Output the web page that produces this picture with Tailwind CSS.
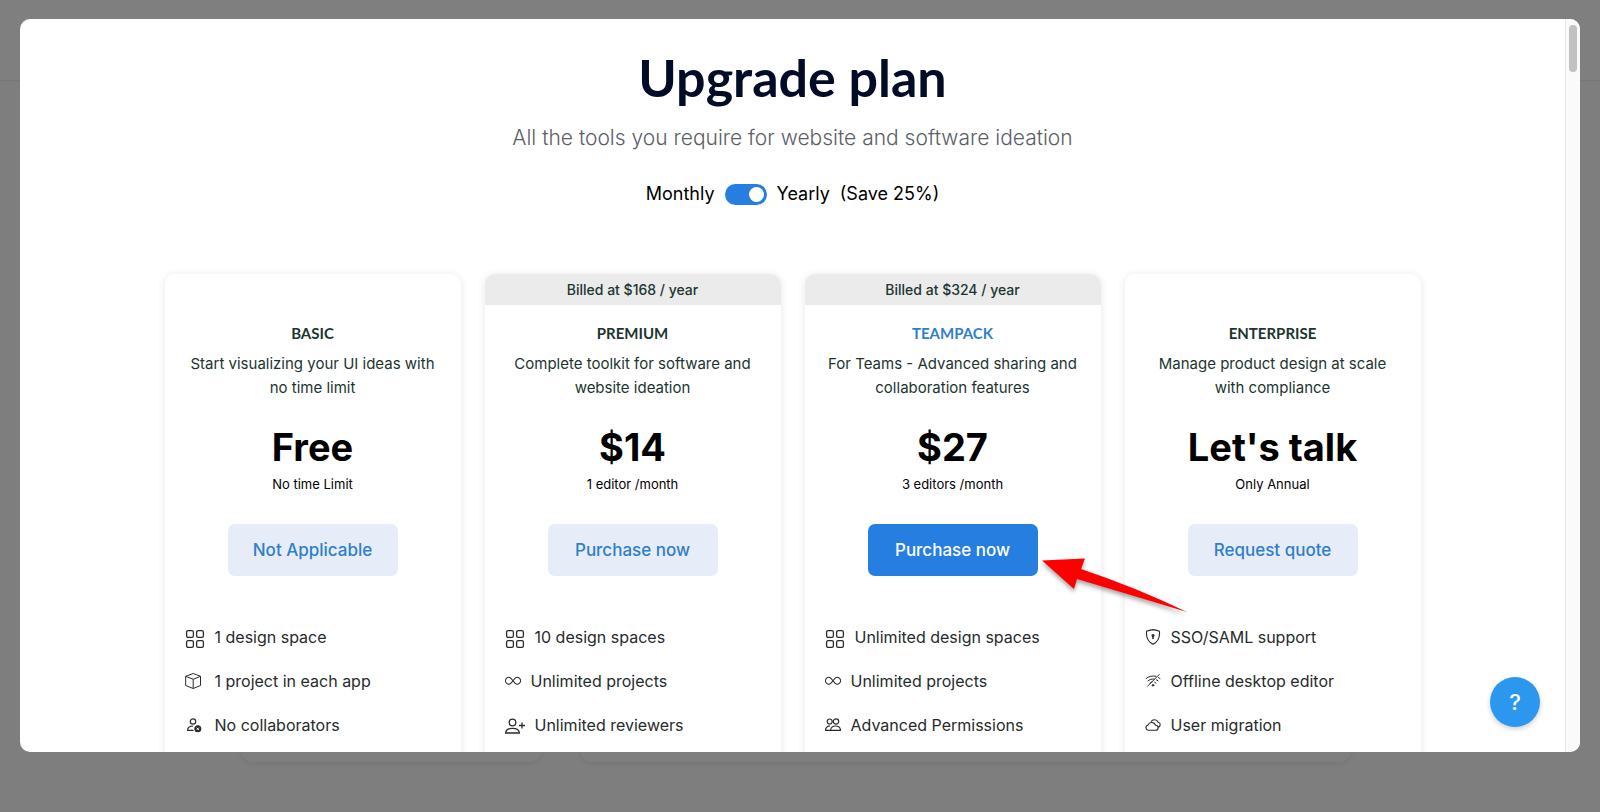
<!doctype html>
<html lang="en">

<head>
    <meta charset="UTF-8">
    <meta name="viewport" content="width=device-width, initial-scale=1.0">
    <title>Upgrade plan</title>
    <script src="https://cdn.jsdelivr.net/npm/@tailwindcss/browser@4"></script>
</head>

<body class="relative h-screen overflow-hidden bg-[#fcfcfc] font-['Inter',sans-serif]">
    <!-- shared icons -->
    <svg class="hidden">
        <symbol id="icon-grid" viewBox="0 0 20 20">
            <g fill="none" stroke="currentColor" stroke-width="1.3">
                <rect x="1.6" y="1.6" width="6.8" height="6.8" rx="1.6" />
                <rect x="11.6" y="1.6" width="6.8" height="6.8" rx="1.6" />
                <rect x="1.6" y="11.6" width="6.8" height="6.8" rx="1.6" />
                <rect x="11.6" y="11.6" width="6.8" height="6.8" rx="1.6" />
            </g>
        </symbol>
        <symbol id="icon-infinity" viewBox="0 0 16 16">
            <path fill="currentColor" d="M5.68 5.792 7.345 7.75 5.681 9.708a2.75 2.75 0 1 1 0-3.916ZM8 6.978 6.416 5.113l-.014-.015a3.75 3.75 0 1 0 0 5.304l.014-.015L8 8.522l1.584 1.865.014.015a3.75 3.75 0 1 0 0-5.304l-.014.015zm.656.772 1.663-1.958a2.75 2.75 0 1 1 0 3.916z" />
        </symbol>
    </svg>

    <!-- page behind the dialog -->
    <div class="flex h-full flex-col">
        <header class="h-[81px] shrink-0 border-b border-[#eeeeee] bg-white"></header>
        <main class="flex h-[681px] gap-[38px] pr-[249px] pl-[241px]">
            <div class="w-[301px] rounded-b-xl bg-white shadow-[0_2px_4px_rgba(0,0,0,0.08)]"></div>
            <div class="flex-1 rounded-b-xl bg-white shadow-[0_2px_4px_rgba(0,0,0,0.08)]"></div>
        </main>
    </div>

    <!-- dialog -->
    <div class="absolute inset-0 flex bg-black/50 px-5 pt-[19px] pb-[60px]">
        <div role="dialog" aria-labelledby="dialog-title" class="flex flex-1 overflow-hidden rounded-[10px] bg-white">
            <div class="flex-1 overflow-hidden pt-[30px]">
                <div class="flex flex-col items-center text-center">
                    <h1 id="dialog-title" class="font-['Lato',sans-serif] text-[52px] leading-[56px] font-bold text-[#020c27]">Upgrade plan</h1>
                    <p class="mt-[17px] text-[21px] leading-8 font-light text-[#5b5e68]">All the tools you require for website and software ideation</p>
                    <div class="mt-7 flex h-6 items-center gap-2.5 text-lg leading-6 text-black">
                        <label for="billing">Monthly</label>
                        <input id="billing" type="checkbox" role="switch" checked
                            class="relative h-[21px] w-[42px] appearance-none rounded-full bg-[#d0d0d0] checked:bg-[#257ee0] before:absolute before:top-[3px] before:left-[3px] before:size-[15px] before:rounded-full before:bg-white checked:before:left-6">
                        <label for="billing">Yearly</label>
                        <span>(Save 25%)</span>
                    </div>
                </div>

                <div class="mx-auto mt-[68px] grid max-w-[1256px] grid-cols-4 gap-6">
                    <!-- basic -->
                    <section class="flex h-[620px] flex-col rounded-[10px] bg-white text-center text-[#1c3530] shadow-[0_1px_8px_rgba(0,0,0,0.1)]">
                        <div class="h-[31px]"></div>
                        <h2 class="mt-4 font-['Lato',sans-serif] text-[15px] leading-6 font-bold">BASIC</h2>
                        <p class="mt-[7px] px-5 text-[15px] leading-6">Start visualizing your UI ideas with no time limit</p>
                        <p class="mt-[23px] text-[38px] leading-[48px] font-bold text-black">Free</p>
                        <p class="mt-[3px] text-[13px] leading-5 text-black">No time Limit</p>
                        <div class="mt-[30px] flex justify-center">
                            <button class="h-[52px] w-[170px] rounded-[7px] bg-[#e6edf8] pt-0.5 text-[17px] font-medium text-[#2f7fcb]">Not Applicable</button>
                        </div>
                        <ul class="mt-[49px] flex flex-col gap-5 px-5 text-left text-base leading-6 text-[#272b2b]">
                            <li class="flex items-center gap-2.5">
                                <svg class="mt-1 size-5"><use href="#icon-grid" /></svg>
                                1 design space
                            </li>
                            <li class="flex items-center gap-2.5">
                                <svg class="mt-0.5 size-5" viewBox="0 0 20 20" fill="none" stroke="currentColor" stroke-linejoin="round">
                                    <path d="M8.200 1.500 15.500 4.300V13.500L8.200 16.500 .7 13.500V4.300ZM.7 4.300 8.200 7.300 15.500 4.300M8.200 7.300V16.500" />
                                </svg>
                                1 project in each app
                            </li>
                            <li class="flex items-center gap-2.5">
                                <svg class="mt-0.5 size-5" viewBox="0 0 20 20" fill="none" stroke="currentColor" stroke-width="1.200">
                                    <circle cx="8" cy="5.500" r="2.700" />
                                    <path d="M8.500 14.400H2.600C2.600 11.700 4.600 10 8.200 10" />
                                    <circle cx="12.800" cy="12.800" r="3.500" fill="currentColor" stroke="none" />
                                    <path d="M11.700 11.700l2.200 2.200m0-2.200l-2.200 2.200" stroke="#fff" stroke-width="1" />
                                </svg>
                                No collaborators
                            </li>
                        </ul>
                    </section>

                    <!-- premium -->
                    <section class="flex h-[620px] flex-col rounded-[10px] bg-white text-center text-[#1c3530] shadow-[0_1px_8px_rgba(0,0,0,0.1)]">
                        <div class="h-[31px] rounded-t-[10px] bg-[#ebebeb] text-sm leading-[31px] font-medium">Billed at $168 / year</div>
                        <h2 class="mt-4 font-['Lato',sans-serif] text-[15px] leading-6 font-bold">PREMIUM</h2>
                        <p class="mt-[7px] px-5 text-[15px] leading-6">Complete toolkit for software and website ideation</p>
                        <p class="mt-[23px] text-[38px] leading-[48px] font-bold text-black">$14</p>
                        <p class="mt-[3px] text-[13px] leading-5 text-black">1 editor /month</p>
                        <div class="mt-[30px] flex justify-center">
                            <button class="h-[52px] w-[170px] rounded-[7px] bg-[#e6edf8] pt-0.5 text-[17px] font-medium text-[#2f7fcb]">Purchase now</button>
                        </div>
                        <ul class="mt-[49px] flex flex-col gap-5 px-5 text-left text-base leading-6 text-[#272b2b]">
                            <li class="flex items-center gap-2.5">
                                <svg class="mt-1 size-5"><use href="#icon-grid" /></svg>
                                10 design spaces
                            </li>
                            <li class="flex items-center gap-2.5">
                                <svg class="size-4"><use href="#icon-infinity" /></svg>
                                Unlimited projects
                            </li>
                            <li class="flex items-center gap-2.5">
                                <svg class="mt-0.5 size-5" viewBox="0 0 20 20" fill="none" stroke="currentColor" stroke-width="1.300">
                                    <circle cx="7.500" cy="6.500" r="3.300" />
                                    <path d="M.7 17C.9 13.800 3.800 12.300 7.500 12.300S14.200 13.800 14.400 17ZM17 6.500V12.500M14 9.500H20" />
                                </svg>
                                Unlimited reviewers
                            </li>
                        </ul>
                    </section>

                    <!-- teampack -->
                    <section class="flex h-[620px] flex-col rounded-[10px] bg-white text-center text-[#1c3530] shadow-[0_1px_8px_rgba(0,0,0,0.1)]">
                        <div class="h-[31px] rounded-t-[10px] bg-[#ebebeb] text-sm leading-[31px] font-medium">Billed at $324 / year</div>
                        <h2 class="mt-4 font-['Lato',sans-serif] text-[15px] leading-6 font-bold text-[#2f7fcb]">TEAMPACK</h2>
                        <p class="mt-[7px] px-5 text-[15px] leading-6">For Teams - Advanced sharing and collaboration features</p>
                        <p class="mt-[23px] text-[38px] leading-[48px] font-bold text-black">$27</p>
                        <p class="mt-[3px] text-[13px] leading-5 text-black">3 editors /month</p>
                        <div class="mt-[30px] flex justify-center">
                            <div class="relative">
                                <button class="h-[52px] w-[170px] rounded-[7px] bg-[#257ee0] pt-0.5 text-[17px] font-medium text-white">Purchase now</button>
                                <!-- pointer to the purchase button -->
                                <svg class="absolute top-7 left-full z-10 h-[70px] w-[160px] drop-shadow-[0_3px_2px_rgba(0,0,0,0.35)]" viewBox="0 0 160 70">
                                    <path fill="#ff0000" d="M4 8.500 47 6.500 43 17Q97 35 149 60Q93 43 39 27L36 37Z" />
                                </svg>
                            </div>
                        </div>
                        <ul class="mt-[49px] flex flex-col gap-5 px-5 text-left text-base leading-6 text-[#272b2b]">
                            <li class="flex items-center gap-2.5">
                                <svg class="mt-1 size-5"><use href="#icon-grid" /></svg>
                                Unlimited design spaces
                            </li>
                            <li class="flex items-center gap-2.5">
                                <svg class="size-4"><use href="#icon-infinity" /></svg>
                                Unlimited projects
                            </li>
                            <li class="flex items-center gap-2.5">
                                <svg class="size-4" viewBox="0 0 16 16" fill="none" stroke="currentColor" stroke-width="1.200">
                                    <circle cx="4.700" cy="4.500" r="2.500" />
                                    <circle cx="11" cy="4.500" r="2.700" />
                                    <path d="M6 13.300H.6C.6 10.600 2 9 5 8.800M5.600 13.300C5.800 10.600 7.600 9 10.600 9S15.300 10.600 15.500 13.300Z" />
                                </svg>
                                Advanced Permissions
                            </li>
                        </ul>
                    </section>

                    <!-- enterprise -->
                    <section class="flex h-[620px] flex-col rounded-[10px] bg-white text-center text-[#1c3530] shadow-[0_1px_8px_rgba(0,0,0,0.1)]">
                        <div class="h-[31px]"></div>
                        <h2 class="mt-4 font-['Lato',sans-serif] text-[15px] leading-6 font-bold">ENTERPRISE</h2>
                        <p class="mt-[7px] px-5 text-[15px] leading-6">Manage product design at scale with compliance</p>
                        <p class="mt-[23px] text-[38px] leading-[48px] font-bold text-black">Let's talk</p>
                        <p class="mt-[3px] text-[13px] leading-5 text-black">Only Annual</p>
                        <div class="mt-[30px] flex justify-center">
                            <button class="h-[52px] w-[170px] rounded-[7px] bg-[#e6edf8] pt-0.5 text-[17px] font-medium text-[#2f7fcb]">Request quote</button>
                        </div>
                        <ul class="mt-[49px] flex flex-col gap-5 px-5 text-left text-base leading-6 text-[#272b2b]">
                            <li class="flex items-center gap-2.5">
                                <svg class="size-4" viewBox="0 0 16 16" fill="none" stroke="currentColor" stroke-width="1.100">
                                    <path d="M8 .6C6 1 3.500 1.500 1.600 2.200C.9 7.800 2.500 12.300 8 15.300C13.500 12.300 15.100 7.800 14.400 2.200C12.500 1.500 10 1 8 .6Z" />
                                    <circle cx="8" cy="6.500" r="1.500" fill="currentColor" stroke="none" />
                                    <path d="M8 6.500V10" stroke-width="1.500" />
                                </svg>
                                SSO/SAML support
                            </li>
                            <li class="flex items-center gap-2.5">
                                <svg class="size-4" viewBox="0 0 16 16" fill="none" stroke="currentColor" stroke-linecap="round">
                                    <path d="M1 5.500C4 3.200 7.500 2.500 11 3.300M3 7.800C4.800 6.500 6.800 5.900 9 6M5 10.200C5.600 9.600 6.300 9.200 7 9M13.500 4.600 15 5.500M11.500 6.900 13 7.800M9.700 9.300 11 10.200M14.300 1.500 2.700 13" />
                                    <circle cx="8" cy="12.300" r=".8" fill="currentColor" />
                                </svg>
                                Offline desktop editor
                            </li>
                            <li class="flex items-center gap-2.5">
                                <svg class="size-4" viewBox="0 0 16 16" fill="none" stroke="currentColor" stroke-linejoin="round" stroke-width="1.100">
                                    <path d="M3.300 13.300A2.700 2.700 0 0 1 3 8A4 4 0 0 1 10.500 8.300A2.500 2.500 0 0 1 10.700 13.300ZM6 4.800A3.900 3.900 0 0 1 13.100 5.200A2.500 2.500 0 0 1 13.300 10.100" />
                                </svg>
                                User migration
                            </li>
                        </ul>
                    </section>
                </div>
            </div>

            <!-- scrollbar -->
            <div class="w-[15px] border-l border-[#e6e6e6] bg-[#fafafa] pt-1.5 pl-[3px]">
                <div class="h-[47px] w-2 rounded-full bg-[#c1c1c1]"></div>
            </div>
        </div>

        <button aria-label="Help" class="absolute right-[60px] bottom-[85px] size-[50px] rounded-full bg-[#2c97ee] text-[22px] font-medium text-white shadow-[0_2px_5px_rgba(0,0,0,0.2)]">?</button>
    </div>
</body>

</html>
